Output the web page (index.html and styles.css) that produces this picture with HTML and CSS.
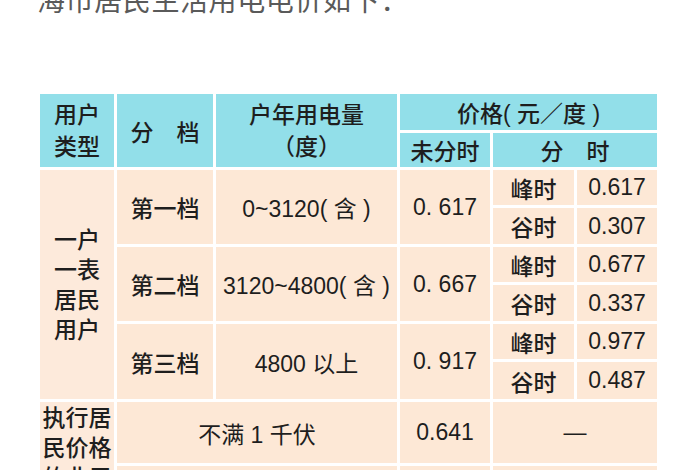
FILE: index.html
```html
<!DOCTYPE html>
<html lang="zh-CN">
<head>
<meta charset="utf-8">
<link rel="stylesheet" href="styles.css">
</head>
<body>
<p class="intro">海市居民生活用电电价如下：</p>
<div class="price-table">
  <div class="cell head rs2 two">用户<br>类型</div>
  <div class="cell head rs2">分　档</div>
  <div class="cell head rs2 two">户年用电量<br>（度）</div>
  <div class="cell head cs3">价格(&nbsp;元／度&nbsp;)</div>
  <div class="cell head">未分时</div>
  <div class="cell head cs2">分　时</div>

  <div class="cell body rs6 side">一户<br>一表<br>居民<br>用户</div>
  <div class="cell body rs2">第一档</div>
  <div class="cell body rs2 num">0~3120(&nbsp;含&nbsp;)</div>
  <div class="cell body rs2 num">0. 617</div>
  <div class="cell body">峰时</div>
  <div class="cell body num">0.617</div>
  <div class="cell body">谷时</div>
  <div class="cell body num">0.307</div>

  <div class="cell body rs2">第二档</div>
  <div class="cell body rs2 num">3120~4800(&nbsp;含&nbsp;)</div>
  <div class="cell body rs2 num">0. 667</div>
  <div class="cell body">峰时</div>
  <div class="cell body num">0.677</div>
  <div class="cell body">谷时</div>
  <div class="cell body num">0.337</div>

  <div class="cell body rs2">第三档</div>
  <div class="cell body rs2 num">4800 以上</div>
  <div class="cell body rs2 num">0. 917</div>
  <div class="cell body">峰时</div>
  <div class="cell body num">0.977</div>
  <div class="cell body">谷时</div>
  <div class="cell body num">0.487</div>

  <div class="cell body rs2 side top">执行居<br>民价格<br>的非居<br>民用户</div>
  <div class="cell body cs2 num">不满 1 千伏</div>
  <div class="cell body num">0.641</div>
  <div class="cell body cs2">—</div>
  <div class="cell body cs2"></div>
  <div class="cell body"></div>
  <div class="cell body cs2"></div>
</div>
</body>
</html>
```
FILE: styles.css
```css
html, body {
  margin: 0;
  padding: 0;
  background: #ffffff;
  overflow: hidden;
}
body {
  width: 700px;
  height: 470px;
  font-family: "Liberation Sans", "Noto Sans CJK SC", sans-serif;
  color: #1e1e1e;
}
.intro {
  margin: -15px 0 0 37px;
  font-family: "Noto Sans CJK SC", sans-serif;
  font-size: 28px;
  line-height: 28px;
  color: #5a5a5a;
  letter-spacing: 0.6px;
  white-space: nowrap;
}
.price-table {
  margin: 81px 0 0 40px;
  display: grid;
  grid-template-columns: 74px 96px 181px 90px 81px 80px;
  grid-template-rows: 36px 34px 35px 36px 35px 36px 35px 37px 61px 60px;
  column-gap: 3px;
  row-gap: 3px;
  width: 617px;
}
.cell {
  display: flex;
  align-items: center;
  justify-content: center;
  text-align: center;
  font-size: 23px;
  font-weight: 500;
  overflow: hidden;
  white-space: nowrap;
}
.num {
  font-size: 23px;
  font-weight: 400;
}
.head {
  background: #92dfe9;
}
.body {
  background: #fde8d6;
}
.two {
  line-height: 32px;
}
.side {
  line-height: 30px;
  background: #fdeadb;
}
.side.top {
  align-items: flex-start;
  padding-top: 1px;
}
.rs2 { grid-row: span 2; }
.rs6 { grid-row: span 6; }
.cs2 { grid-column: span 2; }
.cs3 { grid-column: span 3; }
```
